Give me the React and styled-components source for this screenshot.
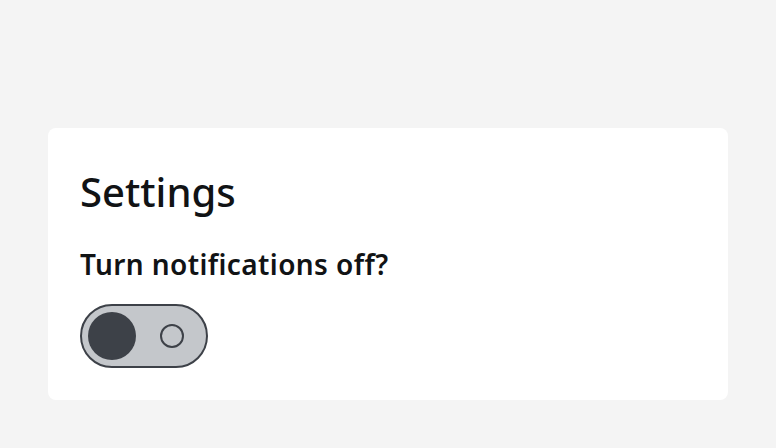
import React, { useState } from "react";
import styled, { createGlobalStyle } from "styled-components";

const Global = createGlobalStyle`
  html, body { margin: 0; padding: 0; background: #f4f4f4; }
  body { font-family: "Noto Sans", "Open Sans", sans-serif; color: #111315; }
`;

const Page = styled.div`
  width: 776px;
  height: 448px;
  box-sizing: border-box;
  padding: 128px 48px 0 48px;
`;

const Card = styled.section`
  background: #ffffff;
  border-radius: 8px;
  box-sizing: border-box;
  height: 272px;
  padding: 40px 32px 32px;
  display: flex;
  flex-direction: column;
  align-items: flex-start;
`;

const Title = styled.h1`
  margin: 0;
  font-size: 40px;
  line-height: 48px;
  font-weight: 500;
`;

const Label = styled.label`
  margin-top: 30px;
  font-size: 28px;
  line-height: 36px;
  font-weight: 600;
  letter-spacing: 0.4px;
`;

const Track = styled.button`
  margin-top: 22px;
  width: 128px;
  height: 64px;
  box-sizing: border-box;
  border: 2px solid #3d4148;
  border-radius: 32px;
  background: #c4c7cb;
  padding: 0 6px;
  display: flex;
  align-items: center;
  justify-content: space-between;
  cursor: pointer;
`;

const Knob = styled.span`
  width: 48px;
  height: 48px;
  border-radius: 50%;
  background: #3d4148;
`;

const Ring = styled.span`
  width: 24px;
  height: 24px;
  box-sizing: border-box;
  border-radius: 50%;
  border: 2px solid #3d4148;
  margin-right: 16px;
`;

export default function App() {
  const [on, setOn] = useState(false);
  return (
    <>
      <Global />
      <Page>
        <Card>
          <Title>Settings</Title>
          <Label>Turn notifications off?</Label>
          <Track aria-pressed={on} onClick={() => setOn(!on)}>
            <Knob />
            <Ring />
          </Track>
        </Card>
      </Page>
    </>
  );
}
